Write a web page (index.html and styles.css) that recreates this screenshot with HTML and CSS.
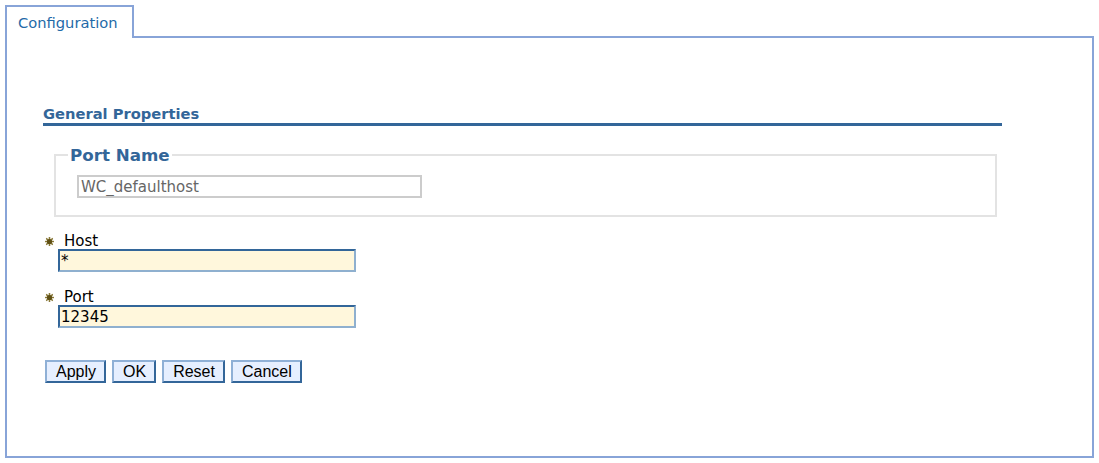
FILE: index.html
```html
<!DOCTYPE html>
<html>
<head>
<meta charset="utf-8">
<link rel="stylesheet" href="styles.css">
</head>
<body>
<div class="tabbar">
  <div class="tab">Configuration</div>
  <div class="tab-fill"></div>
</div>
<div class="panel">
  <div class="section">
    <h2 class="section-title">General Properties</h2>
    <fieldset class="group">
      <legend class="group-legend">Port Name</legend>
      <input class="readonly-input" type="text" value="WC_defaulthost" readonly>
    </fieldset>
    <div class="field">
      <label class="field-label"><span class="req"><svg width="9" height="9" viewBox="0 0 9 9"><g stroke="#8a7a3a" stroke-width="1.6" stroke-linecap="round"><line x1="4.5" y1="0.6" x2="4.5" y2="8.4"/><line x1="0.6" y1="4.5" x2="8.4" y2="4.5"/><line x1="1.7" y1="1.7" x2="7.3" y2="7.3"/><line x1="7.3" y1="1.7" x2="1.7" y2="7.3"/></g><circle cx="4.5" cy="4.5" r="2.6" fill="#5e4f14"/></svg></span>Host</label>
      <input class="text-input" type="text" value="*">
    </div>
    <div class="field">
      <label class="field-label"><span class="req"><svg width="9" height="9" viewBox="0 0 9 9"><g stroke="#8a7a3a" stroke-width="1.6" stroke-linecap="round"><line x1="4.5" y1="0.6" x2="4.5" y2="8.4"/><line x1="0.6" y1="4.5" x2="8.4" y2="4.5"/><line x1="1.7" y1="1.7" x2="7.3" y2="7.3"/><line x1="7.3" y1="1.7" x2="1.7" y2="7.3"/></g><circle cx="4.5" cy="4.5" r="2.6" fill="#5e4f14"/></svg></span>Port</label>
      <input class="text-input" type="text" value="12345">
    </div>
    <div class="buttons">
      <button class="btn">Apply</button>
      <button class="btn">OK</button>
      <button class="btn">Reset</button>
      <button class="btn">Cancel</button>
    </div>
  </div>
</div>
</body>
</html>
```
FILE: styles.css
```css
html, body {
  margin: 0;
  padding: 0;
  background: #ffffff;
}
body {
  padding: 5px 5px 0 5px;
  font-family: "DejaVu Sans", Verdana, sans-serif;
  font-size: 14.7px;
  color: #000;
}
.tabbar {
  display: flex;
  height: 33px;
}
.tab {
  border: 2px solid #88a4d8;
  border-bottom: none;
  color: #1f6aa8;
  font-size: 14.7px;
  line-height: 18px;
  padding: 7px 0 0 11px;
  box-sizing: border-box;
  width: 129px;
  background: #fff;
}
.tab-fill {
  flex: 1;
  border-bottom: 2px solid #88a4d8;
  border-right: 2px solid #88a4d8;
  margin-top: 31px;
}
.panel {
  height: 420px;
  box-sizing: border-box;
  border: 2px solid #88a4d8;
  border-top: none;
}
.section {
  padding: 67px 0 0 36px;
}
.section-title {
  margin: 0;
  width: 959px;
  font-size: 14.7px;
  font-weight: bold;
  color: #336699;
  border-bottom: 3px solid #336699;
  padding-bottom: 0;
  line-height: 18px;
}
.group {
  margin: 19px 0 0 11px;
  width: 943px;
  box-sizing: border-box;
  border: 2px solid #e3e3e3;
  padding: 10px 0 17px 21px;
}
.group-legend {
  font-size: 16.7px;
  line-height: 20px;
  font-weight: bold;
  color: #336699;
  padding: 0 2px;
  margin-left: -9px;
}
.readonly-input {
  display: block;
  width: 345px;
  height: 23px;
  box-sizing: border-box;
  border: 2px solid #cccccc;
  font-family: "DejaVu Sans", Verdana, sans-serif;
  font-size: 15px;
  color: #666;
  padding: 0 2px;
  margin: 0;
  outline: none;
}
.field {
  margin-top: 16px;
  display: flex;
  flex-direction: column;
}
.field + .field {
  margin-top: 17px;
}
.field-label {
  display: flex;
  align-items: center;
  font-size: 15px;
  line-height: 16px;
  color: #000;
  margin-left: 2px;
}
.req {
  display: inline-flex;
  width: 9px;
  height: 9px;
  margin-right: 10px;
}
.text-input {
  margin: 0 0 0 15px;
  width: 298px;
  height: 23px;
  box-sizing: border-box;
  background: #fff7dc;
  border: 2px solid;
  border-color: #336699 #8fb0cf #8fb0cf #336699;
  font-family: "DejaVu Sans", Verdana, sans-serif;
  font-size: 15px;
  color: #000;
  padding: 0 1px;
  outline: none;
}
.buttons {
  display: flex;
  gap: 6px;
  margin: 32px 0 0 2px;
}
.btn {
  height: 23px;
  box-sizing: border-box;
  background: #e6efff;
  border: 2px solid;
  border-color: #8fb0d6 #336699 #336699 #8fb0d6;
  font-family: "Liberation Sans", Arial, sans-serif;
  font-size: 16px;
  color: #000;
  padding: 0 8px 0 9px;
  line-height: 17px;
}
```
